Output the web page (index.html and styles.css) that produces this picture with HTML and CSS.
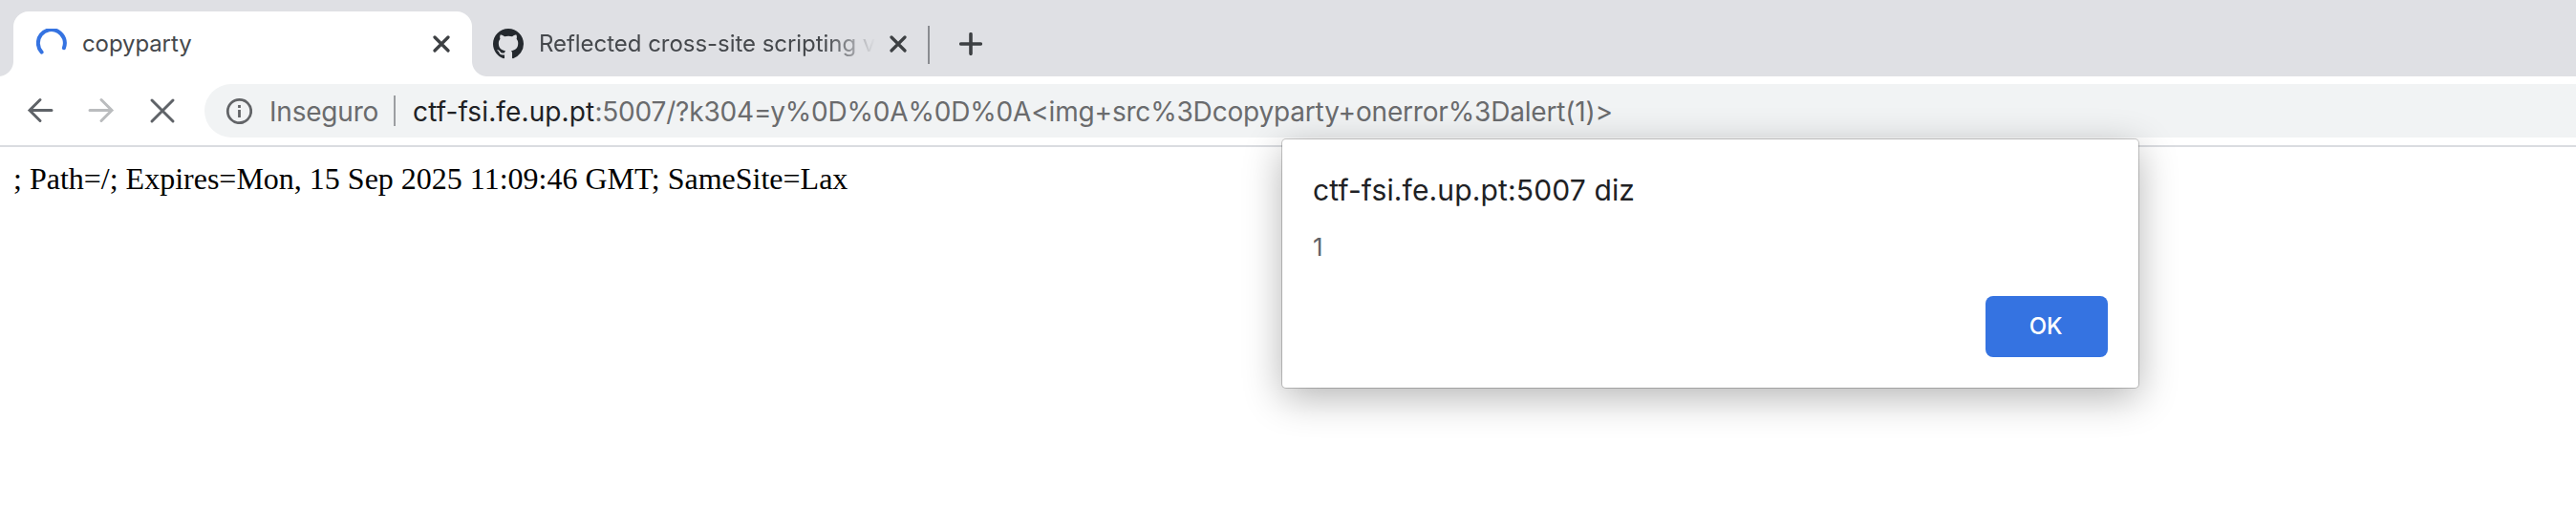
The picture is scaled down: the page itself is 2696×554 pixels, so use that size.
FILE: index.html
```html
<!DOCTYPE html>
<html lang="pt">
<head>
<meta charset="utf-8">
<title>copyparty</title>
<link rel="stylesheet" href="styles.css">
</head>
<body>
<div class="browser">
  <div class="tabstrip">
    <div class="tab tab-active">
      <svg class="spinner" viewBox="0 0 32 32"><path d="M5.6 24.6A14 14 0 1 1 28.9 20.2"/></svg>
      <span class="tab-title t-copy">copyparty</span>
      <svg class="tab-close" viewBox="0 0 18 18"><path d="M2 2L16 16M16 2L2 16"/></svg>
    </div>
    <div class="tab tab-idle">
      <svg class="github" viewBox="0 0 16 16"><path d="M8 0C3.58 0 0 3.58 0 8c0 3.54 2.29 6.53 5.47 7.59.4.07.55-.17.55-.38 0-.19-.01-.82-.01-1.49-2.01.37-2.53-.49-2.69-.94-.09-.23-.48-.94-.82-1.13-.28-.15-.68-.52-.01-.53.63-.01 1.08.58 1.23.82.72 1.21 1.87.87 2.33.66.07-.52.28-.87.51-1.07-1.78-.2-3.64-.89-3.64-3.95 0-.87.31-1.59.82-2.15-.08-.2-.36-1.02.08-2.12 0 0 .67-.21 2.2.82.64-.18 1.32-.27 2-.27s1.36.09 2 .27c1.53-1.04 2.2-.82 2.2-.82.44 1.1.16 1.92.08 2.12.51.56.82 1.27.82 2.15 0 3.07-1.87 3.75-3.65 3.95.29.25.54.73.54 1.48 0 1.07-.01 1.93-.01 2.2 0 .21.15.46.55.38A8.01 8.01 0 0 0 16 8c0-4.42-3.58-8-8-8z"/></svg>
      <span class="tab-title t-refl">Reflected cross-site scripting v</span>
      <svg class="tab-close" viewBox="0 0 18 18"><path d="M2 2L16 16M16 2L2 16"/></svg>
    </div>
    <div class="tab-divider"></div>
    <svg class="new-tab" viewBox="0 0 24 24"><path d="M12 1.7V22.3M1.7 12H22.3"/></svg>
  </div>
  <div class="toolbar">
    <svg class="nav" viewBox="0 0 28 28"><path d="M26 13.5H3M14 2.5L3 13.5L14 24.5"/></svg>
    <svg class="nav nav-off" viewBox="0 0 28 28"><path d="M2 13.5H25M14 2.5L25 13.5L14 24.5"/></svg>
    <svg class="nav" viewBox="0 0 28 28"><path d="M3 3L25 25M25 3L3 25"/></svg>
    <div class="omnibox">
      <svg class="info" viewBox="0 0 28 28"><circle cx="14.5" cy="14.5" r="12.2"/><path d="M14.5 13V21M14.5 8V11"/></svg>
      <span class="insecure">Inseguro</span>
      <span class="omni-divider"></span>
      <span class="url"><span class="host">ctf-fsi.fe.up.pt</span><span class="path">:5007/?k304=y%0D%0A%0D%0A&lt;img+src%3Dcopyparty+onerror%3Dalert(1)&gt;</span></span>
    </div>
  </div>
  <div class="page"><span class="page-text">; Path=/; Expires=Mon, 15 Sep 2025 11:09:46 GMT; SameSite=Lax</span></div>
</div>
<div class="dialog">
  <div class="dialog-title"><span>ctf-fsi.fe.up.pt:5007 diz</span></div>
  <div class="dialog-message">1</div>
  <button class="ok">OK</button>
</div>
</body>
</html>
```
FILE: styles.css
```css
* { box-sizing: border-box; }
body { margin: 0; background: #fff; font-family: Inter, Roboto, sans-serif; overflow: hidden; }
svg { display: block; flex: none; fill: none; stroke-linecap: round; }
.browser { height: 554px; display: flex; flex-direction: column; }
.tabstrip { height: 80px; flex: none; background: #dfe0e4; display: flex; align-items: center; }
.tab { display: flex; align-items: center; white-space: nowrap; flex: none; }
.tab-active { position: relative; align-self: flex-end; width: 480px; height: 68px; margin-left: 14px; padding: 0 23px 0 24px; background: #fff; border-radius: 16px 16px 0 0; }
.tab-active::before, .tab-active::after { content: ""; position: absolute; bottom: 0; width: 16px; height: 16px; }
.tab-active::before { left: -16px; background: radial-gradient(circle at 0 0, transparent 15.5px, #fff 16.5px); }
.tab-active::after { right: -16px; background: radial-gradient(circle at 100% 0, transparent 15.5px, #fff 16.5px); }
.spinner { width: 32px; height: 32px; stroke: #3573e1; stroke-width: 4; }
.tab-title { font-size: 24px; line-height: 32px; color: #45484c; }
.t-copy { margin-left: 16px; flex: 1; letter-spacing: -0.1px; }
.tab-close { width: 18px; height: 18px; stroke: #3d4043; stroke-width: 3.2; }
.tab-idle { width: 477px; height: 68px; align-self: flex-end; padding: 0 22px 0 22px; }
.github { width: 32px; height: 32px; fill: #24292e; }
.t-refl { margin: 0 13px 0 16px; width: 354px; letter-spacing: -0.04px; -webkit-mask-image: linear-gradient(90deg, #000 300px, transparent 352px); mask-image: linear-gradient(90deg, #000 300px, transparent 352px); }
.tab-divider { width: 2px; height: 40px; margin-top: 14px; background: #8a8c91; }
.new-tab { width: 24px; height: 24px; margin: 12px 0 0 31px; stroke: #3d4043; stroke-width: 3.6; }
.toolbar { height: 74px; flex: none; display: flex; align-items: center; padding: 0 0 0 28px; border-bottom: 2px solid #dadce0; }
.nav { width: 28px; height: 28px; margin-right: 36px; stroke: #5f6368; stroke-width: 3; }
.nav-off { stroke: #babcbe; }
.omnibox { flex: 1; height: 56px; margin-left: -6px; padding-left: 22px; display: flex; align-items: center; background: #f1f3f4; border-radius: 28px 0 0 28px; font-size: 28px; line-height: 36px; white-space: nowrap; color: #6a6b6d; }
.info { width: 28px; height: 28px; stroke: #626467; stroke-width: 2.8; stroke-linecap: butt; }
.insecure { margin-left: 18px; padding-top: 1px; width: 130px; letter-spacing: -0.2px; }
.omni-divider { width: 2px; height: 32px; background: #9c9ea1; margin-right: 18px; }
.url { padding-top: 1px; }
.host { color: #202124; letter-spacing: 0.13px; }
.path { letter-spacing: -0.18px; }
.page { flex: 1; padding: 15px 14px; font: 32px/36px "Liberation Serif", serif; color: #000; white-space: nowrap; }
.dialog { position: absolute; left: 1342px; top: 146px; width: 896px; height: 260px; padding: 33px 32px 32px; display: flex; flex-direction: column; background: #fff; border-radius: 4px; box-shadow: 0 0 0 1px rgba(0,0,0,.2), 0 10px 40px rgba(0,0,0,.3); }
.dialog-title { font-size: 30px; line-height: 40px; color: #202124; white-space: nowrap; letter-spacing: 0.14px; }
.dialog-message { margin-top: 22px; font-size: 26px; line-height: 36px; color: #5f6368; }
.ok { margin-top: auto; align-self: flex-end; width: 128px; height: 64px; padding: 0 2px 0 0; border: 0; border-radius: 8px; background: #3573e1; color: #fff; font: 500 24px/32px Inter, sans-serif; letter-spacing: -0.3px; }
```
